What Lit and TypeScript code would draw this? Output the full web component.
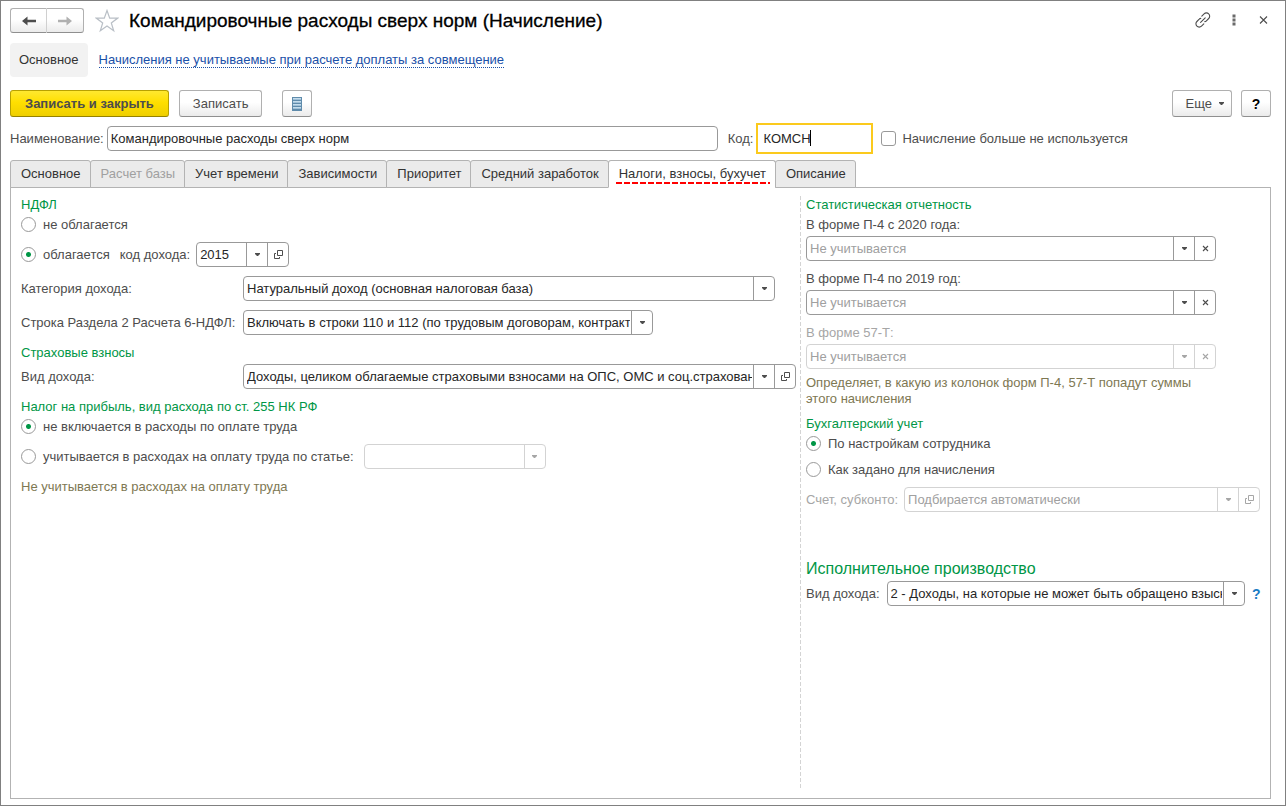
import { LitElement, html, css, svg, nothing } from "lit";
import { customElement, property, state } from "lit/decorators.js";
import { classMap } from "lit/directives/class-map.js";

const arrowDown = html`<svg width="5" height="3" viewBox="0 0 5 3" aria-hidden="true"><path d="M0 0h5v1L3 3H2L0 1z" fill="currentColor" /></svg>`;
const openIcon = html`<svg width="9" height="9" viewBox="0 0 9 9" aria-hidden="true">
  <path d="M3.500 0.500h5v5h-5zM2 3.500H0.500v5h5V7" fill="none" stroke="currentColor" />
</svg>`;
const clearIcon = html`<svg width="7" height="7" viewBox="0 0 7 7" aria-hidden="true">
  <path d="M1 1l5 5M6 1L1 6" stroke="currentColor" stroke-width="1.100" />
</svg>`;

@customElement("choice-field")
export class ChoiceField extends LitElement {
  @property() value = "";
  @property() label = "";
  @property() extra: "" | "open" | "clear" = "";
  @property({ type: Boolean }) placeholder = false;
  @property({ type: Boolean }) disabled = false;

  static styles = css`
    :host {
      display: block;
      min-width: 0;
    }
    .box {
      display: flex;
      height: 25px;
      box-sizing: border-box;
      border: 1px solid #999;
      border-radius: 4px;
      background: #fff;
      color: #4d4d4d;
      overflow: hidden;
    }
    .off {
      border-color: #d3d3d3;
      color: #a6a6a6;
    }
    .pick {
      position: relative;
      display: flex;
      flex: 1;
      min-width: 0;
    }
    select {
      appearance: none;
      flex: 1;
      width: 100%;
      min-width: 0;
      margin: 0;
      border: 0;
      padding: 0 22px 0 3px;
      background: none;
      color: #262626;
      opacity: 1;
      outline: none;
      font: 13px "Liberation Sans", Arial, sans-serif;
    }
    .hint select,
    .off select {
      color: #a0a0a0;
    }
    .cell {
      display: flex;
      align-items: center;
      justify-content: center;
      box-sizing: border-box;
      width: 21px;
      border: 0;
      border-left: 1px solid #999;
      padding: 0;
      background: none;
      color: inherit;
    }
    .off .cell {
      border-color: #d3d3d3;
    }
    .drop {
      position: absolute;
      top: 0;
      right: 0;
      bottom: 0;
      pointer-events: none;
    }
  `;

  render() {
    return html`<div class=${classMap({ box: true, off: this.disabled, hint: this.placeholder })}>
      <span class="pick">
        <select aria-label=${this.label} ?disabled=${this.disabled}>
          <option>${this.value}</option>
        </select>
        <span class="cell drop">${arrowDown}</span>
      </span>
      ${this.extra
        ? html`<button class="cell" type="button" ?disabled=${this.disabled} aria-label=${this.extra === "open" ? "Открыть" : "Очистить"}>
            ${this.extra === "open" ? openIcon : clearIcon}
          </button>`
        : nothing}
    </div>`;
  }
}

const TABS = ["Основное", "Расчет базы", "Учет времени", "Зависимости", "Приоритет", "Средний заработок", "Налоги, взносы, бухучет", "Описание"];

@customElement("app-root")
export class AppRoot extends LitElement {
  @state() private tab = 6;

  static styles = css`
    :host {
      display: block;
      font: 13px/16px "Liberation Sans", Arial, sans-serif;
      color: #4d4d4d;
    }
    .window {
      display: flex;
      flex-direction: column;
      box-sizing: border-box;
      min-height: 100vh;
      border: 1px solid #808080;
      padding: 7px 14px 6px 9px;
      background: #fff;
    }
    button,
    input {
      font: inherit;
      color: inherit;
      margin: 0;
      box-sizing: border-box;
    }
    button {
      padding: 0;
    }
    .row {
      display: flex;
      align-items: center;
    }
    .grow {
      flex: 1;
      min-width: 0;
    }
    .title-bar {
      height: 25px;
    }
    .btn {
      display: flex;
      align-items: center;
      justify-content: center;
      height: 27px;
      border: 1px solid #b0b0b0;
      border-bottom-color: #8f8f8f;
      border-radius: 3px;
      background: linear-gradient(#fff 45%, #ebebeb);
    }
    .history {
      display: flex;
      height: 25px;
    }
    .history .btn {
      width: 37px;
      height: 25px;
    }
    .history .back {
      border-radius: 3px 0 0 3px;
      border-right-color: #d0d0d0;
    }
    .history .forward {
      border-left: 0;
      border-radius: 0 3px 3px 0;
      color: #adadad;
    }
    .plain {
      display: flex;
      border: 0;
      background: none;
    }
    .star {
      margin: 0 10px 0 11px;
    }
    h1 {
      margin: 0;
      font-size: 19px;
      line-height: 24px;
      font-weight: 400;
      color: #000;
      -webkit-text-stroke: 0.3px #000;
    }
    .tools {
      gap: 17px;
      margin-right: 1px;
      padding-bottom: 2px;
    }
    .nav {
      margin-top: 10px;
      gap: 11px;
    }
    .current {
      height: 34px;
      border: 0;
      border-radius: 4px;
      padding: 0 9px;
      background: #f2f2f2;
      color: #333;
    }
    .nav a {
      color: #1a50a8;
      text-decoration: none;
      border-bottom: 1px dotted #1a50a8;
      line-height: 14px;
      margin-top: 1px;
    }
    .commands {
      margin-top: 13px;
    }
    .main {
      border-color: #b8a100;
      border-bottom-color: #958200;
      padding: 0 14px;
      background: linear-gradient(#ffe830, #ffdf00 45%, #efcf00);
      font-weight: 700;
    }
    .save {
      margin: 0 20px 0 10px;
      padding: 0 13px;
    }
    .list {
      width: 30px;
    }
    .more {
      gap: 7px;
      margin-right: 9px;
      padding: 0 7px 0 13px;
    }
    .help {
      width: 30px;
      color: #000;
      font-weight: 700;
      font-size: 14px;
    }
    .name-row {
      margin-top: 6px;
      height: 31px;
    }
    .name {
      flex: 1;
      min-width: 0;
      max-width: 611px;
      height: 25px;
      margin: 0 10px 0 3px;
      border: 1px solid #999;
      border-radius: 4px;
      padding: 0 3px;
      color: #262626;
    }
    .code {
      position: relative;
      width: 117px;
      margin: 0 8px 0 3px;
    }
    .code input {
      width: 100%;
      height: 31px;
      border: 2px solid #fbca1d;
      padding: 0 5px;
      color: #262626;
      outline: none;
      display: block;
      caret-color: transparent;
    }
    .caret {
      position: absolute;
      left: 54px;
      top: 7px;
      width: 1px;
      height: 16px;
      background: #000;
    }
    .check {
      appearance: none;
      width: 15px;
      height: 15px;
      border: 1px solid #999;
      border-radius: 3px;
      background: #fff;
      margin-right: 6px;
    }
    .tabs {
      display: flex;
      margin-top: 6px;
      margin-bottom: -1px;
      position: relative;
    }
    .tab {
      height: 28px;
      border: 1px solid #b3b3b3;
      border-radius: 3px 3px 0 0;
      padding: 0 9px 0 10px;
      background: #ebebeb;
      color: #333;
      white-space: nowrap;
    }
    .tab + .tab {
      margin-left: -1px;
    }
    .tab:disabled {
      color: #a0a0a0;
    }
    .tab.on {
      border-bottom-color: #fff;
      background: repeating-linear-gradient(90deg, #f00 0 6px, transparent 6px 8px) 7px 21px / calc(100% - 12px) 2px no-repeat #fff;
    }
    .panel {
      flex: 1;
      display: grid;
      grid-template-columns: minmax(0, 779fr) minmax(0, 460fr);
      border: 1px solid #b3b3b3;
      padding: 6px 10px 10px;
    }
    .left {
      padding-right: 4px;
    }
    .right {
      padding-left: 6px;
      background: repeating-linear-gradient(#d4d4d4 0 4px, transparent 4px 6px) 0 2px / 1px 100% no-repeat;
    }
    h2,
    h3 {
      margin: 7px 0 0;
      padding-top: 2px;
      font-size: 13px;
      line-height: 18px;
      font-weight: 400;
      color: #009646;
    }
    h2:first-child {
      margin-top: 0;
    }
    h3 {
      margin: 46px 0 3px;
      font-size: 16px;
    }
    .field {
      display: grid;
      grid-template-columns: 222px minmax(0, 1fr);
      align-items: center;
      margin-top: 9px;
    }
    .field.near {
      margin-top: 2px;
    }
    .radio {
      display: flex;
      align-items: center;
      gap: 7px;
      min-height: 20px;
      white-space: nowrap;
    }
    .radio input {
      appearance: none;
      width: 15px;
      height: 15px;
      border: 1px solid #999;
      border-radius: 50%;
      background: #fff;
    }
    .radio input:checked {
      background: radial-gradient(circle, #009646 2px, #fff 3px);
    }
    .radio span {
      padding-top: 1px;
    }
    .spaced {
      margin-top: 8px;
    }
    .w-wide {
      max-width: 532px;
    }
    .w-mid {
      max-width: 410px;
    }
    .w-code {
      width: 93px;
      margin-left: 6px;
    }
    .w-item {
      width: 182px;
      margin-left: 10px;
    }
    .sub {
      margin-left: 10px;
    }
    .stack {
      padding-top: 2px;
      line-height: 18px;
      margin: 7px 0 2px;
    }
    h2 + .stack {
      margin-top: 0;
    }
    .muted {
      color: #a6a6a6;
    }
    .note {
      margin: 0 0 6px;
      padding-top: 6px;
      max-width: 410px;
      color: #7e7853;
    }
    .note + h2 {
      margin-top: 0;
    }
    .note.low {
      padding-top: 10px;
    }
    .right .radio + .radio {
      margin-top: 6px;
    }
    .gap-6 {
      gap: 6px;
    }
    .gap-7 {
      gap: 7px;
    }
    .about {
      border: 0;
      background: none;
      width: 8px;
      color: #1a7cc4;
      font-weight: 700;
      font-size: 14px;
    }
    .kind {
      flex: 1;
      max-width: 359px;
    }
  `;

  private radio(name: string, text: string, checked: boolean) {
    return html`<label class="radio"><input type="radio" name=${name} ?checked=${checked} /><span>${text}</span></label>`;
  }

  private linkIcon = svg`<g fill="none" stroke="#4d4d4d" stroke-width="1.100" stroke-linecap="round">
    <path d="M6.800 4.200l2.300-2.300a3.200 3.200 0 0 1 4.600 0a3.200 3.200 0 0 1 0 4.600l-2.300 2.300a2.500 2.500 0 0 1-1.600.8" />
    <path d="M8.800 11.800l-2.300 2.300a3.200 3.200 0 0 1-4.600 0a3.200 3.200 0 0 1 0-4.600l2.300-2.300a2.500 2.500 0 0 1 1.600-.8" />
    <path d="M5.600 10.400L10.200 5.800" />
  </g>`;

  render() {
    return html`<main class="window">
      <header class="row title-bar">
        <div class="history">
          <button class="btn back" type="button" aria-label="Назад">
            <svg width="14" height="10" viewBox="0 0 14 10"><path d="M0 5l5.500-4.600V3.800H14v2.400H5.500v3.400z" fill="#4d4d4d" /></svg>
          </button>
          <button class="btn forward" type="button" aria-label="Вперед">
            <svg width="14" height="10" viewBox="0 0 14 10"><path d="M14 5L8.500 0.400V3.800H0v2.400h8.500v3.400z" fill="#b0b0b0" /></svg>
          </button>
        </div>
        <button class="plain star" type="button" aria-label="В избранное">
          <svg width="24" height="24" viewBox="0 0 24 24"><path d="M12 1.500l2.700 7.600h8l-6.400 4.800 2.400 7.900L12 17.100l-6.700 4.700 2.400-7.900L1.300 9.100h8z" fill="#fff" stroke="#b9bfc6" stroke-width="1.200" /></svg>
        </button>
        <h1 class="grow">Командировочные расходы сверх норм (Начисление)</h1>
        <div class="row tools">
          <button class="plain" type="button" aria-label="Ссылка"><svg width="16" height="16" viewBox="0 0 16 16">${this.linkIcon}</svg></button>
          <button class="plain" type="button" aria-label="Меню">
            <svg width="12" height="12" viewBox="0 0 12 12"><path d="M4.500 0.500h3v3h-3zM4.500 4.500h3v3h-3zM4.500 8.500h3v3h-3z" fill="#6a6a6a" /></svg>
          </button>
          <button class="plain" type="button" aria-label="Закрыть">
            <svg width="13" height="12" viewBox="0 0 13 12"><path d="M3 2.500l7 7M10 2.500l-7 7" stroke="#4d4d4d" stroke-width="1.100" /></svg>
          </button>
        </div>
      </header>

      <nav class="row nav">
        <button class="current" type="button">Основное</button>
        <a href="#accruals">Начисления не учитываемые при расчете доплаты за совмещение</a>
      </nav>

      <div class="row commands">
        <button class="btn main" type="button">Записать и закрыть</button>
        <button class="btn save" type="button">Записать</button>
        <button class="btn list" type="button" aria-label="Список">
          <svg width="10" height="14" viewBox="0 0 10 14">
            <path d="M0 0h10v14H0z" fill="#5f8bab" />
            <path d="M1 1.500h8M1 4.500h8M1 7.500h8M1 10.500h8" stroke="#c4dcec" />
            <path d="M1 2.500h8M1 5.500h8M1 8.500h8M1 11.500h8" stroke="#9fc0d8" />
          </svg>
        </button>
        <span class="grow"></span>
        <button class="btn more" type="button">Еще ${arrowDown}</button>
        <button class="btn help" type="button" aria-label="Справка">?</button>
      </div>

      <div class="row name-row">
        <label for="name">Наименование:</label>
        <input class="name" id="name" type="text" .value=${"Командировочные расходы сверх норм"} />
        <label for="code">Код:</label>
        <span class="code"><input id="code" type="text" .value=${"КОМСН"} /><span class="caret"></span></span>
        <label class="row"><input class="check" type="checkbox" />Начисление больше не используется</label>
      </div>

      <div class="tabs" role="tablist">
        ${TABS.map(
          (t, i) => html`<button
            class=${classMap({ tab: true, on: i === this.tab })}
            type="button"
            role="tab"
            aria-selected=${i === this.tab}
            ?disabled=${i === 1}
            @click=${() => (this.tab = i)}
          >${t}</button>`
        )}
      </div>

      <div class="panel">
        <section class="left">
          <h2>НДФЛ</h2>
          ${this.radio("ndfl", "не облагается", false)}
          <div class="row spaced">
            ${this.radio("ndfl", "облагается", true)}
            <span class="sub">код дохода:</span>
            <choice-field class="w-code" label="код дохода" value="2015" extra="open"></choice-field>
          </div>
          <div class="field">
            <span>Категория дохода:</span>
            <choice-field class="w-wide" label="Категория дохода" value="Натуральный доход (основная налоговая база)"></choice-field>
          </div>
          <div class="field">
            <span>Строка Раздела 2 Расчета 6-НДФЛ:</span>
            <choice-field class="w-mid" label="Строка Раздела 2 Расчета 6-НДФЛ" value="Включать в строки 110 и 112 (по трудовым договорам, контрактам)"></choice-field>
          </div>
          <h2>Страховые взносы</h2>
          <div class="field near">
            <span>Вид дохода:</span>
            <choice-field label="Вид дохода" extra="open" value="Доходы, целиком облагаемые страховыми взносами на ОПС, ОМС и соц.страхование"></choice-field>
          </div>
          <h2>Налог на прибыль, вид расхода по ст. 255 НК РФ</h2>
          ${this.radio("profit", "не включается в расходы по оплате труда", true)}
          <div class="row spaced">
            ${this.radio("profit", "учитывается в расходах на оплату труда по статье:", false)}
            <choice-field class="w-item" label="Статья" disabled></choice-field>
          </div>
          <p class="note low">Не учитывается в расходах на оплату труда</p>
        </section>

        <section class="right">
          <h2>Статистическая отчетность</h2>
          <div class="stack">В форме П-4 с 2020 года:</div>
          <choice-field class="w-mid" label="В форме П-4 с 2020 года" value="Не учитывается" extra="clear" placeholder></choice-field>
          <div class="stack">В форме П-4 по 2019 год:</div>
          <choice-field class="w-mid" label="В форме П-4 по 2019 год" value="Не учитывается" extra="clear" placeholder></choice-field>
          <div class="stack muted">В форме 57-Т:</div>
          <choice-field class="w-mid" label="В форме 57-Т" value="Не учитывается" extra="clear" disabled></choice-field>
          <p class="note">Определяет, в какую из колонок форм П-4, 57-Т попадут суммы этого начисления</p>
          <h2>Бухгалтерский учет</h2>
          ${this.radio("account", "По настройкам сотрудника", true)}
          ${this.radio("account", "Как задано для начисления", false)}
          <div class="row spaced gap-6">
            <span class="muted">Счет, субконто:</span>
            <choice-field class="grow" label="Счет, субконто" value="Подбирается автоматически" extra="open" disabled></choice-field>
          </div>
          <h3>Исполнительное производство</h3>
          <div class="row gap-7">
            <span>Вид дохода:</span>
            <choice-field class="kind" label="Вид дохода" value="2 - Доходы, на которые не может быть обращено взыскание"></choice-field>
            <button class="about" type="button" aria-label="Подсказка">?</button>
          </div>
        </section>
      </div>
    </main>`;
  }
}
